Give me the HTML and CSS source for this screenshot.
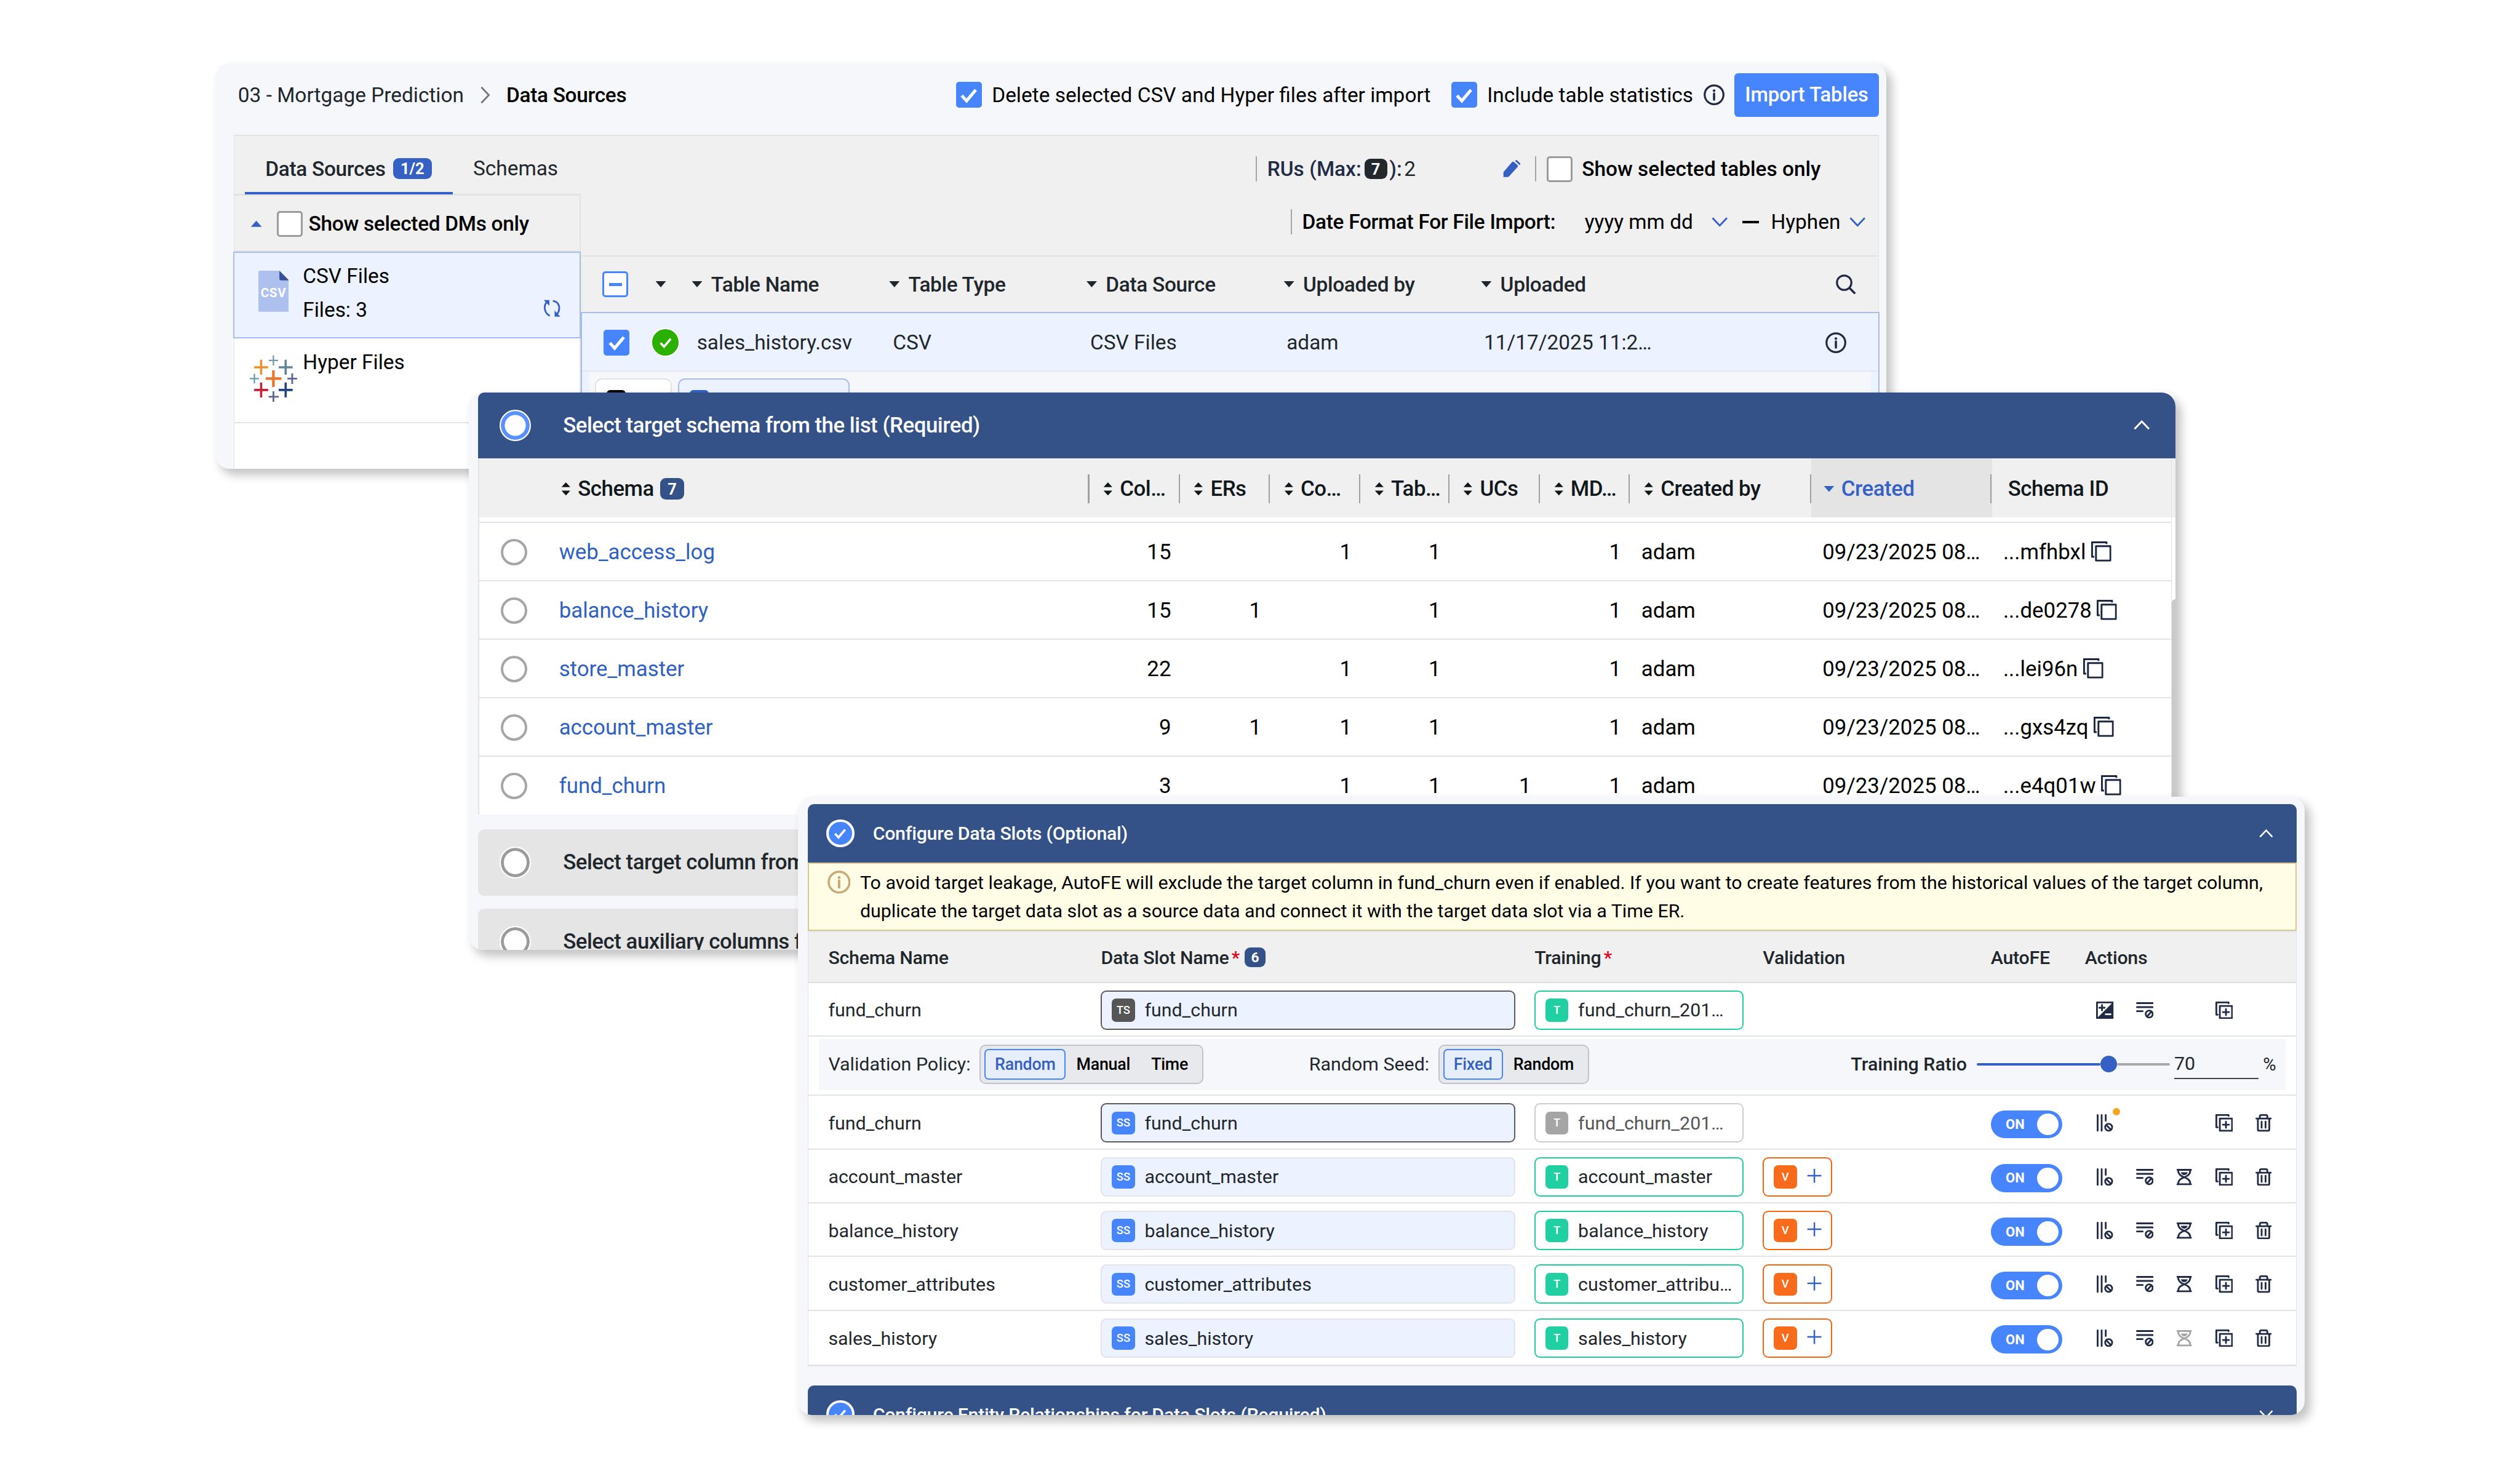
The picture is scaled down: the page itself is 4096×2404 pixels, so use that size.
FILE: index.html
```html
<!DOCTYPE html>
<html lang="en">
<head>
  <meta charset="UTF-8">
  <meta name="viewport" content="width=device-width, initial-scale=1.0">
  <title>Data Sources - Mortgage Prediction</title>
  <link rel="stylesheet" href="styles.css">
</head>
<body>

  <!-- ICONS -->
  <svg class="sprite" width="0" height="0">
    <symbol id="i-check" viewBox="0 0 58 58"><path d="M13 30l11 12 21-25" fill="none" stroke="#fff" stroke-width="7"/></symbol>
    <symbol id="i-info" viewBox="0 0 48 48"><circle cx="24" cy="24" r="21.500" fill="none" stroke="currentColor" stroke-width="4.500"/><circle cx="24" cy="14.500" r="3" fill="currentColor"/><path d="M24 21v14" stroke="currentColor" stroke-width="5" stroke-linecap="round"/></symbol>
    <symbol id="i-down" viewBox="0 0 40 24"><path d="M2 2l18 19L38 2" fill="none" stroke="currentColor" stroke-width="4.500"/></symbol>
    <symbol id="i-up" viewBox="0 0 40 24"><path d="M2 22L20 3l18 19" fill="none" stroke="currentColor" stroke-width="4.500"/></symbol>
    <symbol id="i-sort" viewBox="0 0 22 30"><path d="M11 0l10 11H1zM11 30L1 19h20z" fill="currentColor"/></symbol>
    <symbol id="i-copy" viewBox="0 0 46 46"><path d="M35 6V2H2v33h5M11 11h33v33H11z" fill="none" stroke="currentColor" stroke-width="4.200" stroke-linejoin="round"/></symbol>
    <symbol id="i-dup" viewBox="0 0 40 40"><path d="M30 4V2H2v28h3M10 10h28v28H10zM24 17v14M17 24h14" fill="none" stroke="currentColor" stroke-width="4" stroke-linejoin="round" stroke-linecap="round"/></symbol>
    <symbol id="i-trash" viewBox="0 0 40 40"><path d="M3.500 10h33M11.500 10V5q0-3 3-3h11q3 0 3 3v5M7 10v25q0 3 3 3h20q3 0 3-3V10M15.500 17v14M24.500 17v14" fill="none" stroke="currentColor" stroke-width="4" stroke-linecap="round"/></symbol>
    <symbol id="i-rows" viewBox="0 0 40 40"><path d="M2 3.500h36M2 12.700h36M2 22h13M26 33l8-9" stroke="currentColor" stroke-width="4" stroke-linecap="round"/><circle cx="30" cy="28.500" r="8" fill="none" stroke="currentColor" stroke-width="4"/></symbol>
    <symbol id="i-cols" viewBox="0 0 40 40"><path d="M3.500 2v36M12.700 2v36M22 2v13M24.500 26l8 8" stroke="currentColor" stroke-width="4" stroke-linecap="round"/><circle cx="28.700" cy="30" r="8" fill="none" stroke="currentColor" stroke-width="4"/></symbol>
    <symbol id="i-glass" viewBox="0 0 40 40"><path d="M4.500 3.500h31M4.500 36.500h31M6 4c0 9 6 14 14 16.500C28 18 34 13 34 4M6 36c0-9 6-13 14-15.500C28 23 34 27 34 36" fill="none" stroke="currentColor" stroke-width="4" stroke-linecap="round"/><path d="M12 9h16c-1.500 4-4.500 6.500-8 6.500S13.500 13 12 9z" fill="currentColor"/></symbol>
    <symbol id="i-expo" viewBox="0 0 40 40"><path d="M2 2h36v36H2z" fill="#fff" stroke="currentColor" stroke-width="4" stroke-linejoin="round"/><path d="M38 2v36H2z" fill="currentColor"/><path d="M13.500 8v12M7.500 14h12" stroke="currentColor" stroke-width="4" stroke-linecap="round"/><path d="M22 29h11" stroke="#fff" stroke-width="4" stroke-linecap="round"/></symbol>
    <symbol id="i-plus" viewBox="0 0 34 34"><path d="M17 1v32M1 17h32" stroke="currentColor" stroke-width="3.500"/></symbol>
  </svg>

  <div class="stage">

    <!-- DATA SOURCES -->
    <section class="panel sources">
      <header class="topbar">
        <span>03 - Mortgage Prediction</span>
        <svg class="crumb" viewBox="0 0 22 38"><path d="M2 1l17 18L2 37" fill="none" stroke="#777" stroke-width="4"/></svg>
        <b class="crumb-now">Data Sources</b>
        <span class="box on opt-delete"><svg><use href="#i-check"/></svg></span>
        <span class="opt-label">Delete selected CSV and Hyper files after import</span>
        <span class="box on opt-stats"><svg><use href="#i-check"/></svg></span>
        <span class="opt-label">Include table statistics</span>
        <svg class="info"><use href="#i-info"/></svg>
        <button class="import">Import Tables</button>
      </header>

      <div class="workspace">
        <aside class="side">
          <nav class="tabs">
            <div class="tab active"><b>Data Sources</b><i class="badge">1/2</i></div>
            <div class="tab">Schemas</div>
          </nav>
          <div class="side-filter">
            <i class="tri-up"></i><span class="box"></span><b>Show selected DMs only</b>
          </div>
          <div class="source selected">
            <svg class="csv" viewBox="0 0 70 94">
              <path d="M4 0h44l22 22v68q0 4-4 4H4q-4 0-4-4V4q0-4 4-4z" fill="#adc0ee"/>
              <path d="M48 0l22 22H52q-4 0-4-4z" fill="#345394"/>
              <text x="34.500" y="60" text-anchor="middle" class="csv-text">CSV</text>
            </svg>
            <div class="source-name">CSV Files<br>Files: 3</div>
            <svg class="refresh" viewBox="0 0 40 40"><path d="M10 4C0 12 1 30 15 37M22 3c16 2 19 20 8 32" fill="none" stroke="currentColor" stroke-width="4"/><path d="M1 1h13v13zM26 25v14h13z" fill="currentColor"/></svg>
          </div>
          <div class="source">
            <svg class="tableau" viewBox="0 0 109 108">
              <path d="M54 35v38M36.500 54h36" stroke="#e8762c" stroke-width="6"/>
              <path d="M26 11v34M10 28h32" stroke="#eb912b" stroke-width="5"/>
              <path d="M82 11v34M66 28h32" stroke="#5b879b" stroke-width="5"/>
              <path d="M26 63v34M10 80h32" stroke="#c72035" stroke-width="5"/>
              <path d="M82 63v34M66 80h32" stroke="#1f457e" stroke-width="5"/>
              <path d="M54 1v23M43.500 12.500h21M10.500 43v22M0 54h21" stroke="#7199a6" stroke-width="3.200"/>
              <path d="M54 83v25M43 95.500h23M97 42v24M86 54h23" stroke="#5c6692" stroke-width="4"/>
            </svg>
            <div class="source-name">Hyper Files</div>
          </div>
        </aside>

        <div class="tables">
          <div class="filters">
            <div class="filter-row">
              <i class="rule"></i><b class="rus">RUs</b><b class="navy">(Max:</b><i class="badge dark">7</i><b class="navy">):</b><span class="two">2</span>
              <svg class="pencil" viewBox="0 0 40 40"><path d="M2 38V28L21 6q2-2 4 0l7 6q2 2 0 4L13 37q-1 1-3 1z" fill="currentColor" stroke="currentColor" stroke-width="2"/><path d="M29 1l10 9" stroke="currentColor" stroke-width="4"/></svg>
              <i class="rule"></i><span class="box"></span><b class="only">Show selected tables only</b>
            </div>
            <div class="filter-row dates">
              <i class="rule"></i><b class="fmt">Date Format For File Import:</b>
              <span class="ymd">yyyy mm dd</span><svg class="chev"><use href="#i-down"/></svg>
              <i class="dash"></i><span>Hyphen</span><svg class="chev last"><use href="#i-down"/></svg>
            </div>
          </div>
          <div class="grid files head">
            <div><span class="box some"><i></i></span></div>
            <div><i class="tri"></i></div>
            <div><i class="tri"></i>Table Name</div>
            <div><i class="tri"></i>Table Type</div>
            <div><i class="tri"></i>Data Source</div>
            <div><i class="tri"></i>Uploaded by</div>
            <div><i class="tri"></i>Uploaded
              <svg class="search" viewBox="0 0 46 46"><circle cx="19" cy="19" r="16.500" fill="none" stroke="currentColor" stroke-width="4.500"/><path d="M30 30l14 14" stroke="currentColor" stroke-width="5"/></svg>
            </div>
          </div>
          <div class="picked">
            <div class="grid files row">
              <div><span class="box on"><svg><use href="#i-check"/></svg></span></div>
              <div><span class="ok"><svg viewBox="0 0 58 58"><use href="#i-check"/></svg></span></div>
              <div class="fname">sales_history.csv</div>
              <div>CSV</div>
              <div>CSV Files</div>
              <div>adam</div>
              <div>11/17/2025 11:2…<svg class="info"><use href="#i-info"/></svg></div>
            </div>
            <div class="chips"><span class="chip"><i></i></span><span class="chip blue"><i></i></span></div>
          </div>
        </div>
      </div>
    </section>

    <!-- TARGET SCHEMA -->
    <section class="panel schema">
      <div class="bar open">
        <i class="step current"></i><b>Select target schema from the list (Required)</b>
        <svg class="fold"><use href="#i-up"/></svg>
      </div>
      <div class="schema-wrap">
        <div class="schema-table">
          <div class="grid schemas head">
            <div class="first"><svg class="sort"><use href="#i-sort"/></svg>Schema<i class="badge deep">7</i></div>
            <div><svg class="sort"><use href="#i-sort"/></svg>Col…</div>
            <div><svg class="sort"><use href="#i-sort"/></svg>ERs</div>
            <div><svg class="sort"><use href="#i-sort"/></svg>Co…</div>
            <div><svg class="sort"><use href="#i-sort"/></svg>Tab…</div>
            <div><svg class="sort"><use href="#i-sort"/></svg>UCs</div>
            <div><svg class="sort"><use href="#i-sort"/></svg>MD…</div>
            <div><svg class="sort"><use href="#i-sort"/></svg>Created by</div>
            <div class="sorted"><i class="tri"></i>Created</div>
            <div class="sid">Schema ID</div>
          </div>
          <div class="gap"></div>
          <div class="grid schemas row">
            <div class="first"><i class="radio"></i><a>web_access_log</a></div>
            <div class="n">15</div><div class="n"></div><div class="n">1</div><div class="n">1</div><div class="n"></div><div class="n">1</div>
            <div>adam</div><div>09/23/2025 08…</div><div class="id">...mfhbxl<svg class="copy"><use href="#i-copy"/></svg></div>
          </div>
          <div class="grid schemas row">
            <div class="first"><i class="radio"></i><a>balance_history</a></div>
            <div class="n">15</div><div class="n">1</div><div class="n"></div><div class="n">1</div><div class="n"></div><div class="n">1</div>
            <div>adam</div><div>09/23/2025 08…</div><div class="id">...de0278<svg class="copy"><use href="#i-copy"/></svg></div>
          </div>
          <div class="grid schemas row">
            <div class="first"><i class="radio"></i><a>store_master</a></div>
            <div class="n">22</div><div class="n"></div><div class="n">1</div><div class="n">1</div><div class="n"></div><div class="n">1</div>
            <div>adam</div><div>09/23/2025 08…</div><div class="id">...lei96n<svg class="copy"><use href="#i-copy"/></svg></div>
          </div>
          <div class="grid schemas row">
            <div class="first"><i class="radio"></i><a>account_master</a></div>
            <div class="n">9</div><div class="n">1</div><div class="n">1</div><div class="n">1</div><div class="n"></div><div class="n">1</div>
            <div>adam</div><div>09/23/2025 08…</div><div class="id">...gxs4zq<svg class="copy"><use href="#i-copy"/></svg></div>
          </div>
          <div class="grid schemas row">
            <div class="first"><i class="radio"></i><a>fund_churn</a></div>
            <div class="n">3</div><div class="n"></div><div class="n">1</div><div class="n">1</div><div class="n">1</div><div class="n">1</div>
            <div>adam</div><div>09/23/2025 08…</div><div class="id">...e4q01w<svg class="copy"><use href="#i-copy"/></svg></div>
          </div>
        </div>
        <div class="scroll"><i class="scroll-head"></i><i class="thumb"></i></div>
      </div>
      <div class="bar closed"><i class="step"></i><b>Select target column from</b></div>
      <div class="bar closed"><i class="step"></i><b>Select auxiliary columns f</b></div>
    </section>

    <!-- DATA SLOTS -->
    <section class="panel slots">
      <div class="bar">
        <i class="step done"><svg viewBox="0 0 58 58"><use href="#i-check"/></svg></i><b>Configure Data Slots (Optional)</b>
        <svg class="fold"><use href="#i-up"/></svg>
      </div>
      <div class="notice">
        <svg class="info"><use href="#i-info"/></svg>
        <p>To avoid target leakage, AutoFE will exclude the target column in fund_churn even if enabled. If you want to create features from the historical values of the target column,<br>duplicate the target data slot as a source data and connect it with the target data slot via a Time ER.</p>
      </div>
      <div class="slot-table">
        <div class="grid slot head">
          <div>Schema Name</div>
          <div>Data Slot Name<em>*</em><i class="badge deep">6</i></div>
          <div>Training<em>*</em></div>
          <div>Validation</div>
          <div>AutoFE</div>
          <div class="actions-head">Actions</div>
        </div>
        <div class="grid slot row top">
          <div>fund_churn</div>
          <div><span class="field edge"><i class="tag ts">TS</i>fund_churn</span></div>
          <div><span class="train"><i class="tag t">T</i>fund_churn_201…</span></div>
          <div></div>
          <div></div>
          <div class="actions"><svg><use href="#i-expo"/></svg><svg><use href="#i-rows"/></svg><svg></svg><svg><use href="#i-dup"/></svg><svg></svg></div>
        </div>
        <div class="policy-row">
          <div class="policy">
            <span>Validation Policy:</span>
            <div class="seg"><b class="cur">Random</b><b>Manual</b><b>Time</b></div>
            <span class="seed">Random Seed:</span>
            <div class="seg"><b class="cur">Fixed</b><b>Random</b></div>
            <b class="ratio">Training Ratio</b>
            <div class="slider"><i class="fill"></i><i class="knob"></i><i class="rest"></i></div>
            <span class="num">70</span><span class="pct">%</span>
          </div>
        </div>
        <div class="grid slot row">
          <div>fund_churn</div>
          <div><span class="field edge"><i class="tag ss">SS</i>fund_churn</span></div>
          <div><span class="train off"><i class="tag t">T</i>fund_churn_201…</span></div>
          <div></div>
          <div><span class="toggle">ON<i></i></span></div>
          <div class="actions"><span class="dotted"><svg><use href="#i-cols"/></svg></span><svg></svg><svg></svg><svg><use href="#i-dup"/></svg><svg><use href="#i-trash"/></svg></div>
        </div>
        <div class="grid slot row">
          <div>account_master</div>
          <div><span class="field"><i class="tag ss">SS</i>account_master</span></div>
          <div><span class="train"><i class="tag t">T</i>account_master</span></div>
          <div><span class="valid"><i class="tag v">V</i><svg class="plus"><use href="#i-plus"/></svg></span></div>
          <div><span class="toggle">ON<i></i></span></div>
          <div class="actions"><svg><use href="#i-cols"/></svg><svg><use href="#i-rows"/></svg><svg><use href="#i-glass"/></svg><svg><use href="#i-dup"/></svg><svg><use href="#i-trash"/></svg></div>
        </div>
        <div class="grid slot row">
          <div>balance_history</div>
          <div><span class="field"><i class="tag ss">SS</i>balance_history</span></div>
          <div><span class="train"><i class="tag t">T</i>balance_history</span></div>
          <div><span class="valid"><i class="tag v">V</i><svg class="plus"><use href="#i-plus"/></svg></span></div>
          <div><span class="toggle">ON<i></i></span></div>
          <div class="actions"><svg><use href="#i-cols"/></svg><svg><use href="#i-rows"/></svg><svg><use href="#i-glass"/></svg><svg><use href="#i-dup"/></svg><svg><use href="#i-trash"/></svg></div>
        </div>
        <div class="grid slot row">
          <div>customer_attributes</div>
          <div><span class="field"><i class="tag ss">SS</i>customer_attributes</span></div>
          <div><span class="train"><i class="tag t">T</i>customer_attribu…</span></div>
          <div><span class="valid"><i class="tag v">V</i><svg class="plus"><use href="#i-plus"/></svg></span></div>
          <div><span class="toggle">ON<i></i></span></div>
          <div class="actions"><svg><use href="#i-cols"/></svg><svg><use href="#i-rows"/></svg><svg><use href="#i-glass"/></svg><svg><use href="#i-dup"/></svg><svg><use href="#i-trash"/></svg></div>
        </div>
        <div class="grid slot row">
          <div>sales_history</div>
          <div><span class="field"><i class="tag ss">SS</i>sales_history</span></div>
          <div><span class="train"><i class="tag t">T</i>sales_history</span></div>
          <div><span class="valid"><i class="tag v">V</i><svg class="plus"><use href="#i-plus"/></svg></span></div>
          <div><span class="toggle">ON<i></i></span></div>
          <div class="actions"><svg><use href="#i-cols"/></svg><svg><use href="#i-rows"/></svg><svg class="dim"><use href="#i-glass"/></svg><svg><use href="#i-dup"/></svg><svg><use href="#i-trash"/></svg></div>
        </div>
      </div>
      <div class="bar next">
        <i class="step done"><svg viewBox="0 0 58 58"><use href="#i-check"/></svg></i><b>Configure Entity Relationships for Data Slots (Required)</b>
        <svg class="fold"><use href="#i-down"/></svg>
      </div>
    </section>

  </div>

</body>
</html>
```

FILE: styles.css
```css
* {
  box-sizing: border-box;
}
body {
  margin: 0;
  background: #fff;
  font-family: Roboto, sans-serif;
  overflow: hidden;
}
b {
  font-weight: 500;
}
b, .head {
  letter-spacing: -0.009em;
}
i, em {
  font-style: normal;
}
svg {
  display: block;
  flex: none;
}
.sprite {
  position: absolute;
}
/* everything is sized on a 5760px wide board and scaled down */
.stage {
  position: relative;
  width: 5760px;
  height: 3380px;
  zoom: 0.71111;
  color: #1f272c;
  white-space: nowrap;
}
.panel {
  position: absolute;
  background: #f5f7fb;
  border-radius: 32px;
  overflow: hidden;
  box-shadow: 12px 14px 22px rgba(0,0,0,0.24);
}
.sources {
  left: 492px;
  top: 145px;
  width: 3820px;
  height: 926px;
  padding: 0 17px 0 42px;
  font-size: 47px;
}
.schema {
  left: 1072px;
  top: 897px;
  width: 3900px;
  height: 1274px;
  padding-left: 21px;
  font-size: 49px;
}
.schema b, .schema .head {
  letter-spacing: -0.0135em;
}
.slots {
  left: 1824px;
  top: 1821px;
  width: 3444px;
  height: 1414px;
  padding: 17px 18px 0 22px;
  font-size: 42.700px;
}

/* shared bits */
.box {
  flex: none;
  display: flex;
  align-items: center;
  justify-content: center;
  width: 59px;
  height: 59px;
  border: 5px solid #9b9b9b;
  border-radius: 7px;
  background: #fff;
}
.box.on {
  border: 0;
  background: #4785ff;
}
.box.on svg {
  width: 58px;
  height: 58px;
}
.box.some {
  border-color: #4785ff;
}
.box.some i {
  width: 30px;
  height: 7px;
  background: #4785ff;
}
.badge {
  display: inline-flex;
  align-items: center;
  justify-content: center;
  height: 47px;
  border-radius: 13px;
  background: #3560c4;
  color: #fff;
  font-size: 36px;
  font-weight: 700;
}
.badge.deep {
  background: #345188;
}
.badge.dark {
  width: 52px;
  background: #22282c;
}
.tri {
  flex: none;
  width: 24px;
  height: 14px;
  margin-right: 21px;
  background: currentColor;
  clip-path: polygon(0 0, 100% 0, 50% 100%);
}
.tri-up {
  width: 25px;
  height: 14px;
  background: #3560c4;
  clip-path: polygon(0 100%, 100% 100%, 50% 0);
}
.info {
  width: 48px;
  height: 48px;
  color: #222b45;
}
.grid {
  display: grid;
}
.grid > div {
  display: flex;
  align-items: center;
}
.head {
  font-weight: 500;
}

/* top bar */
.topbar {
  display: flex;
  align-items: center;
  height: 163px;
  padding: 22px 0 41px 10px;
}
.crumb {
  width: 22px;
  height: 38px;
  margin: 0 37px 0 38px;
}
.crumb-now {
  color: #000;
}
.opt-delete {
  margin-left: auto;
}
.opt-stats {
  margin-left: 47px;
}
.opt-label {
  color: #000;
  margin-left: 23px;
}
.topbar .info {
  margin: 0 22px 0 24px;
}
.import {
  width: 331px;
  height: 100px;
  padding: 0;
  border: 0;
  border-radius: 9px;
  background: #4785ff;
  color: #fff;
  font: 500 46px Roboto, sans-serif;
  letter-spacing: -0.003em;
}

/* workspace */
.workspace {
  display: flex;
  height: 763px;
  border-top: 3px solid #e3e3e3;
  background: #f0f0f0;
}
.side {
  width: 793px;
  background: #fff;
  border-left: 2px solid #e3e3e3;
}
.tabs {
  display: flex;
  height: 137px;
  padding-left: 24px;
  border-bottom: 5px solid #e3e3e3;
  background: #f0f0f0;
}
.tab {
  display: flex;
  align-items: center;
  padding: 15px 0 0 47px;
}
.tab.active {
  width: 475px;
  height: 133px;
  border-bottom: 7px solid #3560c4;
  padding-top: 22px;
}
.tab .badge {
  width: 89px;
  margin-left: 17px;
}
.side-filter {
  display: flex;
  align-items: center;
  height: 128px;
  padding: 2px 0 0 38px;
  color: #000;
  background: #f0f0f0;
  border-right: 3px solid #e3e3e3;
  border-bottom: 3px solid #e3e3e3;
}
.side-filter .box {
  margin: 0 13px 0 35px;
}
.source {
  display: flex;
  align-items: flex-start;
  height: 195px;
  padding: 0 42px 0 34px;
  border-bottom: 3px solid #e3e3e3;
  border-right: 3px solid #e3e3e3;
  color: #000;
}
.source.selected {
  height: 197px;
  margin-left: -2px;
  padding-left: 54px;
  border: 3px solid #a8bdee;
  background: #ecf2ff;
}
.csv {
  width: 70px;
  height: 94px;
  margin: 40px 32px 0 0;
}
.csv-text {
  font-size: 29px;
  font-weight: 700;
  letter-spacing: 1px;
  fill: #fff;
}
.source-name {
  line-height: 78px;
  margin-top: 13px;
}
.refresh {
  width: 40px;
  height: 40px;
  margin: 106px 0 0 auto;
  color: #3560c4;
}
.tableau {
  width: 109px;
  height: 108px;
  margin: 38px 13px 0 1px;
}
.source:not(.selected) .source-name {
  margin-top: 16px;
}

/* table filters */
.tables {
  flex: 1;
  border-right: 2px solid #e3e3e3;
}
.filters {
  height: 275px;
  padding: 14px 28px 0 0;
  border-bottom: 4px solid #e3e3e3;
}
.filter-row {
  display: flex;
  align-items: center;
  justify-content: flex-end;
  height: 123px;
  color: #000;
}
.filter-row:first-child {
  padding-right: 104px;
}
.filter-row.dates {
  margin-top: -2px;
}
.rule {
  width: 3px;
  height: 58px;
  background: #a5a5a5;
}
.rus {
  margin: 0 12px 0 23px;
}
.rus, .navy {
  color: #222b45;
  letter-spacing: 0;
}
.only {
  letter-spacing: 0;
}
.filter-row .badge {
  margin: 0 5px 0 7px;
}
.two {
  margin-left: 5px;
  color: #1f272c;
}
.pencil {
  width: 40px;
  height: 40px;
  margin: 0 34px 0 199px;
  color: #3560c4;
}
.filter-row .box {
  margin: 0 21px 0 24px;
}
.fmt {
  margin: 0 67px 0 23px;
}
.ymd {
  margin-right: 41px;
}
.chev {
  width: 40px;
  height: 22px;
  color: #3560c4;
}
.dash {
  width: 39px;
  height: 5px;
  margin: 0 27px 0 31px;
  background: #000;
}
.chev.last {
  margin-left: 19px;
}

/* uploaded files */
.files {
  grid-template-columns: 167px 83px 451px 451px 451px 451px 1fr;
  padding-left: 3px;
}
.files.head {
  height: 127px;
  border-left: 2px solid #e3e3e3;
}
.files .box {
  margin-left: 46px;
}
.files.head > div {
  padding-top: 1px;
}
.files.head .tri {
  margin-right: 20px;
}
.search {
  width: 46px;
  height: 46px;
  margin: 0 51px 0 auto;
  color: #222b45;
}
.picked {
  height: 400px;
  border: 3px solid #a8bdee;
  background: #ecf2ff;
  margin-right: -2px;
}
.files.row {
  height: 134px;
  padding: 4px 0 0;
  border-bottom: 3px solid #e3e6ec;
}
.files.row > div:nth-child(n+4) {
  padding-left: 10px;
}
.files.row > div:nth-child(n+6) {
  padding-left: 8px;
}
.files.row .box {
  margin-left: 50px;
}
.files.row .fname {
  padding-left: 13px;
}
.files.row .info {
  margin: 0 73px 0 auto;
}
.ok {
  margin-left: -9px;
  width: 66px;
  height: 66px;
  border: 4px solid #fff;
  border-radius: 50%;
  background: #2bb000;
  display: flex;
  align-items: center;
  justify-content: center;
}
.ok svg {
  width: 42px;
  height: 42px;
}
.chips {
  display: flex;
  gap: 14px;
  height: 260px;
  margin: 0 16px 0 18px;
  padding: 15px 0 0 12px;
  background: #f5f7fb;
}
.chip {
  width: 176px;
  height: 100px;
  padding: 24px;
  border: 3px solid #e3e3e3;
  border-radius: 16px;
  background: #fff;
}
.chip.blue {
  width: 392px;
  border-color: #a8bdee;
  background: #ecf2ff;
}
.chip i {
  display: block;
  width: 43px;
  height: 43px;
  border-radius: 8px;
  background: #000;
}
.chip.blue i {
  background: #3560c4;
}

/* accordion bars */
.bar {
  display: flex;
  align-items: center;
  height: 150px;
  padding: 0 57px 0 49px;
  background: #345188;
  color: #fff;
}
.bar.open {
  border-radius: 14px 0 0 0;
}
.bar.closed {
  height: 151px;
  margin: 34px 0 0;
  border-radius: 15px;
  background: #e5e5e5;
  color: #1f272c;
}
.bar.closed + .bar.closed {
  margin-top: 30px;
}
.step {
  flex: none;
  width: 72px;
  height: 72px;
  margin-right: 73px;
  border-radius: 50%;
  background: #fff;
  border: 3px solid #fff;
  box-shadow: inset 0 0 0 7px #9b9b9b;
}
.step.current {
  box-shadow: inset 0 0 0 9px #5a90ff;
}
.fold {
  width: 40px;
  height: 22px;
  margin-left: auto;
}

/* schema list */
.schema-wrap {
  display: flex;
  height: 815px;
  background: #fff;
}
.schema-table {
  width: 3869px;
  border-left: 3px solid #e3e3e3;
}
.schemas {
  grid-template-columns: 1395px 207px 206px 207px 203px 207px 206px 414px 413px 1fr;
}
.schemas.head {
  height: 136px;
  color: #11181c;
  background: #f0f0f0;
}
.schemas.head > div {
  padding: 5px 0 0 31px;
}
.schemas.head > div:not(:last-child)::after {
  content: "";
  width: 3px;
  height: 67px;
  margin: 0 1px 0 auto;
  background: #a0a0a0;
}
.schemas.head > .first {
  padding-left: 187px;
}
.sort {
  width: 22px;
  height: 30px;
  margin-right: 16px;
}
.schemas .badge {
  width: 54px;
  height: 49px;
  margin-left: 15px;
  letter-spacing: 0;
}
.schemas.head > .sorted {
  padding-left: 28px;
  background: #e4e4e4;
  color: #3560c4;
}
.schemas.head > .sid {
  padding-left: 36px;
}
.sorted .tri {
  margin-right: 16px;
}
.gap {
  height: 10px;
}
.schemas.row {
  height: 133.600px;
  border-top: 3px solid #e3e4e9;
  color: #000;
}
.schemas.row > div {
  padding: 2px 0 0 25px;
}
.schemas.row > .first {
  padding-left: 49px;
}
.schemas.row > .n {
  padding: 2px 21px 0 0;
  justify-content: flex-end;
}
.radio {
  width: 61px;
  height: 61px;
  margin-right: 72px;
  border: 6px solid #a6a6a6;
  border-radius: 50%;
}
.schemas a {
  color: #2f60c4;
}
.copy {
  width: 46px;
  height: 46px;
  margin-left: 12px;
  margin-top: -2px;
  color: #1c2742;
}
.scroll {
  width: 10px;
  border-left: 2px solid #e3e3e3;
}
.scroll-head {
  display: block;
  height: 136px;
  background: #f0f0f0;
}
.thumb {
  display: block;
  height: 700px;
  margin-top: 187px;
  border-radius: 8px 0 0 0;
  background: #c9c9c9;
}

/* data slots */
.slots .bar {
  height: 134px;
  padding: 0 53px 0 43px;
  border-radius: 14px 14px 0 0;
}
.slots .step {
  width: 64px;
  height: 64px;
  margin-right: 42px;
  border: 6px solid #fff;
  background: #4785ff;
  box-shadow: none;
}
.step svg {
  width: 52px;
  height: 52px;
  padding: 5px;
}
.slots .fold {
  width: 35px;
  height: 19px;
}
.notice {
  display: flex;
  height: 155px;
  padding: 11px 0 0 42px;
  border: 3px solid #d8c98f;
  background: #fffde6;
  color: #000;
}
.notice .info {
  width: 53px;
  height: 53px;
  margin: 4px 22px 0 0;
  color: #c9a874;
}
.notice p {
  margin: 0;
  line-height: 64.500px;
}
.slot-table {
  border: 2px solid #e3e4e9;
  border-bottom-width: 5px;
  background: #fff;
}
.slot {
  grid-template-columns: 623px 991px 522px 521px 240px 1fr;
  padding-left: 46px;
}
.slot.head {
  height: 119px;
  padding-top: 2px;
  border-top: 2px solid #e3e4e9;
  border-bottom: 3px solid #dedede;
  background: #f0f0f0;
}
.slot em {
  margin-left: 6px;
  color: #e0001b;
}
.slot .badge {
  width: 47px;
  height: 44px;
  margin-left: 12px;
  font-size: 32px;
  letter-spacing: 0;
}
.slot .actions-head {
  margin-left: -25px;
}
.slot.row {
  height: 122.800px;
  padding-top: 4px;
  border-bottom: 3px solid #e3e4e9;
}
.slot.row.top {
  padding-top: 3px;
}
.slot.row:last-child {
  border-bottom: 0;
  padding-bottom: 2px;
}
.field, .train, .valid {
  display: flex;
  align-items: center;
  width: 947px;
  height: 90px;
  padding-left: 22px;
  border: 3px solid #e2e4ea;
  border-radius: 13px;
  background: #ecf2ff;
}
.field.edge {
  border-color: #5a5a5a;
}
.train {
  width: 478px;
  border-color: #1fcd9d;
  background: #fff;
}
.train.off {
  border-color: #ccced3;
  color: #555;
}
.valid {
  width: 159px;
  border-color: #f5640f;
  background: #fff;
}
.tag {
  display: flex;
  align-items: center;
  justify-content: center;
  width: 53px;
  height: 53px;
  margin-right: 22px;
  border-radius: 10px;
  color: #fff;
  font-size: 26px;
  font-weight: 500;
}
.ts {
  background: #565656;
}
.ss {
  background: #4785ff;
}
.t {
  background: #20cfa2;
}
.off .t {
  background: #a5a5a5;
}
.v {
  background: #f76b1a;
}
.plus {
  width: 34px;
  height: 34px;
  color: #3560c4;
  margin: -5px 0 0 1px;
}
.toggle {
  display: flex;
  align-items: center;
  justify-content: space-between;
  width: 163px;
  height: 64px;
  margin-top: 6px;
  padding: 0 8px 0 34px;
  border-radius: 32px;
  background: #4785ff;
  color: #fff;
  font-size: 31px;
  font-weight: 700;
}
.toggle i {
  width: 49px;
  height: 49px;
  border-radius: 50%;
  background: #fff;
}
.actions {
  gap: 50.800px;
  padding-left: 1px;
  color: #222b45;
}
.actions svg {
  width: 40px;
  height: 40px;
}
.dim {
  color: #a5a5a5;
}
.dotted {
  position: relative;
}
.dotted::after {
  content: "";
  position: absolute;
  right: -15px;
  top: -15px;
  width: 17px;
  height: 17px;
  border-radius: 50%;
  background: #f5a623;
}

/* validation policy */
.policy-row {
  height: 135px;
  padding: 5px 24px 0 25px;
  border-bottom: 3px solid #e3e4e9;
}
.policy {
  display: flex;
  align-items: center;
  height: 117px;
  padding: 0 22px 2px 21px;
  background: #f5f7fb;
}
.seg {
  display: flex;
  height: 91px;
  margin-left: 21px;
  padding: 8px;
  border: 3px solid #c2c3c6;
  border-radius: 14px;
  background: #e8e9ec;
  font-size: 37.700px;
  color: #000;
}
.seg b {
  display: flex;
  align-items: center;
  padding: 0 24px;
}
.seg .cur {
  padding: 0 21px;
  border: 3px solid #4785ff;
  border-radius: 10px;
  background: #e6eefb;
  color: #3560c4;
}
.seed {
  margin-left: 242px;
}
.ratio {
  margin-left: auto;
  letter-spacing: 0;
}
.slider {
  display: flex;
  align-items: center;
  width: 442px;
  margin: 0 10px 0 22px;
}
.fill, .rest {
  height: 6px;
  border-radius: 3px;
  background: #3560c4;
}
.fill {
  width: 283px;
}
.rest {
  flex: 1;
  background: #a9a9a9;
}
.knob {
  width: 38px;
  height: 38px;
  border-radius: 50%;
  background: #3560c4;
}
.num {
  width: 193px;
  height: 69px;
  line-height: 67px;
  border-bottom: 3px solid #444;
}
.pct {
  margin-left: 10px;
  font-size: 41px;
}
.slots .next {
  margin-top: 43px;
}
```
